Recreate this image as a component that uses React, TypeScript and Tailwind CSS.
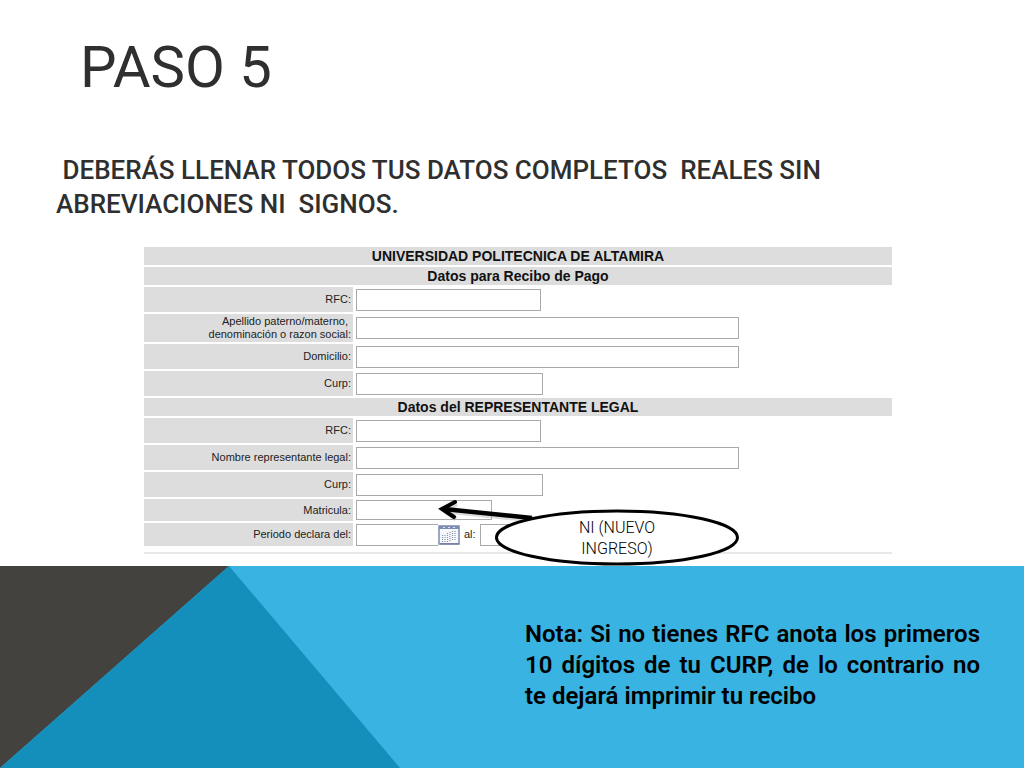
import { ReactNode } from "react";

type FieldProps = {
    id: string;
    label: ReactNode;
    inputWidth?: string;
    rowHeight?: string;
    inputHeight?: string;
    children?: ReactNode;
};

const inputStyle = "border border-[#a9a9a9] bg-white px-1 text-xs outline-none";

function SectionHeader({ children }: { children: ReactNode }) {
    return (
        <h2 className="h-[18px] bg-[#dddddd] text-center text-sm leading-[18px] font-bold text-[#111111]">
            {children}
        </h2>
    );
}

function Field({
    id,
    label,
    inputWidth = "w-[185px]",
    rowHeight = "h-[25px]",
    inputHeight = "h-[22px]",
    children,
}: FieldProps) {
    return (
        <div className={`flex items-center gap-[3px] ${rowHeight}`}>
            <label
                htmlFor={id}
                className="flex h-full w-[209px] shrink-0 items-center justify-end bg-[#dddddd] pr-[2px] text-right text-[11px] leading-[13px] text-[#222222]"
            >
                {label}
            </label>
            {children ?? (
                <input
                    id={id}
                    type="text"
                    className={`${inputStyle} ${inputWidth} ${inputHeight}`}
                />
            )}
        </div>
    );
}

function CalendarIcon() {
    return (
        <svg viewBox="0 0 22 20" className="h-5 w-[22px]" aria-hidden="true">
            <rect x="1" y="1" width="20" height="18" fill="#f8f9fc" stroke="#8492b4" strokeWidth="1.6" />
            <path d="M1 2.5H21" stroke="#7c8cb4" strokeWidth="3" />
            <path d="M5 2.5h2M10 2.5h2M15 2.5h2" stroke="#dfe5f3" strokeWidth="1" />
            <path
                d="M4.5 10v7M7 10v7M9.5 8v9M12 7v9M14.5 6v9M17 6v9"
                stroke="#8791aa"
                strokeWidth="1.2"
                strokeDasharray="1 1"
            />
            <path d="M2 18.8H21" stroke="#6c7a9c" strokeWidth="1.2" />
        </svg>
    );
}

function Callout() {
    return (
        <div className="absolute top-[249px] left-[290px] h-[70px] w-[310px]">
            <svg viewBox="0 0 310 70" className="absolute inset-0 h-full w-full" aria-hidden="true">
                <path
                    d="M99 24L12 15M23 8L10 14L22 23"
                    fill="none"
                    stroke="#999999"
                    strokeOpacity="0.35"
                    strokeWidth="5"
                />
                <path d="M98 22L10 13" stroke="#000000" strokeWidth="4.5" />
                <path
                    d="M21 6L8 13L20 21"
                    fill="none"
                    stroke="#000000"
                    strokeWidth="4"
                    strokeLinecap="round"
                />
                <ellipse cx="183" cy="41.5" rx="120.5" ry="26.5" fill="#ffffff" stroke="#000000" strokeWidth="3" />
            </svg>
            <p className="absolute top-[21px] left-[133px] w-[100px] text-center font-['Roboto'] text-base leading-[21px] font-light text-black">
                NI (NUEVO INGRESO)
            </p>
        </div>
    );
}

function ReceiptForm() {
    return (
        <form className="relative mr-33 ml-36 flex flex-col gap-[2px] border-b-2 border-[#e8e8e8] pb-[6px] font-['Liberation_Sans',sans-serif]">
            <SectionHeader>UNIVERSIDAD POLITECNICA DE ALTAMIRA</SectionHeader>
            <SectionHeader>Datos para Recibo de Pago</SectionHeader>
            <Field id="rfc" label="RFC:" />
            <Field
                id="apellido"
                rowHeight="h-[28px]"
                inputWidth="w-[383px]"
                label={
                    <span>
                        Apellido paterno/materno,&nbsp;
                        <br />
                        denominación o razon social:
                    </span>
                }
            />
            <Field id="domicilio" label="Domicilio:" inputWidth="w-[383px]" />
            <Field id="curp" label="Curp:" inputWidth="w-[187px]" />
            <SectionHeader>Datos del REPRESENTANTE LEGAL</SectionHeader>
            <Field id="rep-rfc" label="RFC:" />
            <Field id="rep-nombre" label="Nombre representante legal:" inputWidth="w-[383px]" />
            <Field id="rep-curp" label="Curp:" inputWidth="w-[187px]" />
            <Field
                id="matricula"
                label="Matricula:"
                rowHeight="h-[22px]"
                inputHeight="h-[20px]"
                inputWidth="w-[136px]"
            />
            <Field id="periodo-del" label="Periodo declara del:" rowHeight="h-[23px]">
                <div className="flex items-center">
                    <input id="periodo-del" type="text" className={`${inputStyle} h-[22px] w-[82px] border-r-0`} />
                    <button type="button" aria-label="Calendario">
                        <CalendarIcon />
                    </button>
                    <label htmlFor="periodo-al" className="px-1 text-[11px] text-[#222222]">
                        al:
                    </label>
                    <input id="periodo-al" type="text" className={`${inputStyle} h-[22px] w-[82px]`} />
                </div>
            </Field>
            <Callout />
        </form>
    );
}

function Footer() {
    return (
        <footer className="relative flex flex-1 justify-end bg-[#39b3e1] pt-[53px] pr-11">
            <svg
                viewBox="0 0 1024 203"
                preserveAspectRatio="none"
                className="absolute inset-0 h-full w-full"
                aria-hidden="true"
            >
                <polygon points="0,0 229,0 0,203" fill="#43423f" />
                <polygon points="229,0 400,203 0,203" fill="#148fbc" />
            </svg>
            <p className="relative w-[455px] text-justify text-2xl leading-[31px] font-semibold text-black">
                Nota: Si no tienes RFC anota los primeros 10 dígitos de tu CURP, de lo contrario no te dejará
                imprimir tu recibo
            </p>
        </footer>
    );
}

function App() {
    return (
        <div className="flex min-h-screen flex-col bg-white font-['Roboto',sans-serif] text-[#2f2f2f]">
            <header className="px-14 pt-8">
                <h1 className="pl-6 text-[58px] leading-[70px]">PASO 5</h1>
                <p className="mt-[51px] text-[26px] leading-[34px] font-medium whitespace-pre-wrap">
                    {"  DEBERÁS LLENAR TODOS TUS DATOS COMPLETOS  REALES SIN ABREVIACIONES NI  SIGNOS.".slice(1)}
                </p>
            </header>
            <main className="pt-[26px] pb-3">
                <ReceiptForm />
            </main>
            <Footer />
        </div>
    );
}

export default App;
